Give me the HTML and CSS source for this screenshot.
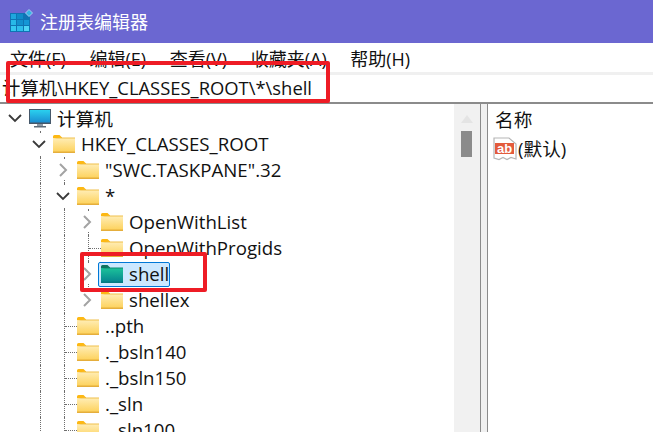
FILE: index.html
```html
<!DOCTYPE html>
<html lang="zh-CN">
<head>
  <meta charset="UTF-8">
  <title>注册表编辑器</title>
  <link rel="stylesheet" href="styles.css">
</head>
<body>
  <svg class="defs" width="0" height="0">
    <defs>
      <linearGradient id="folder-fill" x1="0" y1="0" x2="0" y2="1">
        <stop offset="0" stop-color="#ffedb5"/>
        <stop offset="1" stop-color="#fdd25c"/>
      </linearGradient>
      <linearGradient id="shell-fill" x1="0" y1="0" x2="0" y2="1">
        <stop offset="0" stop-color="#1cc39a"/>
        <stop offset="1" stop-color="#06858f"/>
      </linearGradient>
      <linearGradient id="screen-fill" x1="0" y1="0" x2="0" y2="1">
        <stop offset="0" stop-color="#2ad0ee"/>
        <stop offset="1" stop-color="#1b8ed2"/>
      </linearGradient>
      <symbol id="folder" viewBox="0 0 22 18">
        <path d="M0 1.5Q0 0 1.5 0H6.5L8.5 2H9V4H0Z" fill="#fdb813"/>
        <path d="M0 3H22V17H0Z" fill="url(#folder-fill)"/>
        <path d="M8 2.5H22V3.5H0" fill="#f0c04c"/>
        <path d="M0 16.5H22V18H0Z" fill="#e5ae3c"/>
      </symbol>
      <symbol id="folder-open" viewBox="0 0 22 18">
        <path d="M0 1.5Q0 0 1.5 0H6.5L8.5 2H9V4H0Z" fill="#0f7360"/>
        <path d="M0 3H22V17H0Z" fill="url(#shell-fill)"/>
        <path d="M8 2.5H22V3.5H0" fill="#0e8a72"/>
        <path d="M0 16.5H22V18H0Z" fill="#067a80"/>
      </symbol>
      <symbol id="chev-right" viewBox="0 0 10 14">
        <path d="M2 1L8 7L2 13" fill="none" stroke="#a3a3a3" stroke-width="2"/>
      </symbol>
      <symbol id="chev-down" viewBox="0 0 14 10">
        <path d="M1 2L7 8L13 2" fill="none" stroke="#3a3a3a" stroke-width="1.8"/>
      </symbol>
    </defs>
  </svg>

  <div class="window">
    <header class="titlebar">
      <svg class="app-icon" width="23" height="23" viewBox="0 0 23 23">
        <rect x="0" y="4" width="20" height="19" fill="#0f74b4"/>
        <rect x="1" y="5" width="5" height="5" fill="#1fa6dd"/>
        <rect x="7" y="5" width="6" height="5" fill="#0f8bc9"/>
        <rect x="1" y="11" width="5" height="5" fill="#27b9e8"/>
        <rect x="7" y="11" width="6" height="5" fill="#128fce"/>
        <rect x="14" y="11" width="5" height="5" fill="#1496d6"/>
        <rect x="1" y="17" width="5" height="5" fill="#35c8f0"/>
        <rect x="7" y="17" width="6" height="5" fill="#2dbdec"/>
        <rect x="14" y="17" width="5" height="5" fill="#4ed4f5"/>
        <path d="M19 0.5L22.5 4L19 7.5L15.5 4Z" fill="#35b5e5" stroke="#a9c8ee" stroke-width="1"/>
      </svg>
      <span>注册表编辑器</span>
    </header>

    <nav class="menubar">
      <span>文件(F)</span>
      <span>编辑(E)</span>
      <span>查看(V)</span>
      <span>收藏夹(A)</span>
      <span>帮助(H)</span>
    </nav>

    <div class="address">计算机\HKEY_CLASSES_ROOT\*\shell</div>

    <main class="panes">
      <section class="tree">
        <div class="row">
          <span class="slot"><svg class="chev-d"><use href="#chev-down"/></svg></span>
          <svg class="monitor" width="22" height="19" viewBox="0 0 22 19">
            <rect x="0" y="0" width="22" height="15" fill="#46586a"/>
            <rect x="1" y="1" width="20" height="12.5" fill="url(#screen-fill)"/>
            <rect x="8" y="15" width="6" height="2" fill="#8b98a5"/>
            <rect x="5" y="17" width="12" height="1.5" fill="#5d6b78"/>
          </svg>
          <span class="label">计算机</span>
        </div>
        <div class="row">
          <span class="slot"></span>
          <span class="slot line"><svg class="chev-d"><use href="#chev-down"/></svg></span>
          <svg class="folder"><use href="#folder"/></svg>
          <span class="label">HKEY_CLASSES_ROOT</span>
        </div>
        <div class="row">
          <span class="slot"></span>
          <span class="slot line"></span>
          <span class="slot line"><svg class="chev-r"><use href="#chev-right"/></svg></span>
          <svg class="folder"><use href="#folder"/></svg>
          <span class="label">"SWC.TASKPANE".32</span>
        </div>
        <div class="row">
          <span class="slot"></span>
          <span class="slot line"></span>
          <span class="slot line"><svg class="chev-d"><use href="#chev-down"/></svg></span>
          <svg class="folder"><use href="#folder"/></svg>
          <span class="label">*</span>
        </div>
        <div class="row">
          <span class="slot"></span>
          <span class="slot line"></span>
          <span class="slot line"></span>
          <span class="slot line"><svg class="chev-r"><use href="#chev-right"/></svg></span>
          <svg class="folder"><use href="#folder"/></svg>
          <span class="label">OpenWithList</span>
        </div>
        <div class="row">
          <span class="slot"></span>
          <span class="slot line"></span>
          <span class="slot line"></span>
          <span class="slot line tick"></span>
          <svg class="folder"><use href="#folder"/></svg>
          <span class="label">OpenWithProgids</span>
        </div>
        <div class="row">
          <span class="slot"></span>
          <span class="slot line"></span>
          <span class="slot line"></span>
          <span class="slot line"><svg class="chev-r"><use href="#chev-right"/></svg></span>
          <span class="selected">
            <svg class="folder"><use href="#folder-open"/></svg>
            <span class="label">shell</span>
          </span>
        </div>
        <div class="row">
          <span class="slot"></span>
          <span class="slot line"></span>
          <span class="slot line"></span>
          <span class="slot"><svg class="chev-r"><use href="#chev-right"/></svg></span>
          <svg class="folder"><use href="#folder"/></svg>
          <span class="label">shellex</span>
        </div>
        <div class="row">
          <span class="slot"></span>
          <span class="slot line"></span>
          <span class="slot line tick"></span>
          <svg class="folder"><use href="#folder"/></svg>
          <span class="label">..pth</span>
        </div>
        <div class="row">
          <span class="slot"></span>
          <span class="slot line"></span>
          <span class="slot line tick"></span>
          <svg class="folder"><use href="#folder"/></svg>
          <span class="label">._bsln140</span>
        </div>
        <div class="row">
          <span class="slot"></span>
          <span class="slot line"></span>
          <span class="slot line tick"></span>
          <svg class="folder"><use href="#folder"/></svg>
          <span class="label">._bsln150</span>
        </div>
        <div class="row">
          <span class="slot"></span>
          <span class="slot line"></span>
          <span class="slot line tick"></span>
          <svg class="folder"><use href="#folder"/></svg>
          <span class="label">._sln</span>
        </div>
        <div class="row">
          <span class="slot"></span>
          <span class="slot line"></span>
          <span class="slot line tick"></span>
          <svg class="folder"><use href="#folder"/></svg>
          <span class="label">._sln100</span>
        </div>
      </section>

      <div class="scrollbar">
        <span class="scroll-up"></span>
        <span class="scroll-thumb"></span>
      </div>
      <div class="splitter"></div>

      <section class="values">
        <div class="values-head">名称</div>
        <div class="value-row">
          <svg class="ab-icon" width="24" height="24" viewBox="0 0 24 24">
            <path d="M1 1H16L23 7V22L18 20.5L14 22.5L10 20.5L6 22.5L1 21Z" fill="#fff" stroke="#b5b5b5" stroke-width="1.2"/>
            <rect x="2" y="6" width="19" height="11" fill="#e35b3c"/>
            <text x="11.5" y="15.5" class="ab-text">ab</text>
          </svg>
          <span class="value-name">(默认)</span>
        </div>
      </section>
    </main>
  </div>

  <div class="mark mark-address"></div>
  <div class="mark mark-shell"></div>
</body>
</html>
```

FILE: styles.css
```css
html, body {
  margin: 0;
  padding: 0;
  height: 100%;
  overflow: hidden;
  background-color: #fff;
}
body {
  font-family: "Open Sans", "Noto Sans CJK SC", sans-serif;
  font-size: 18.67px;
  color: #111;
}
.defs {
  position: absolute;
}
.window {
  display: flex;
  flex-direction: column;
  height: 432px;
}
.titlebar {
  display: flex;
  align-items: center;
  gap: 7px;
  height: 43px;
  padding-left: 10px;
  padding-bottom: 2px;
  box-sizing: border-box;
  background-color: #6b67d1;
  color: #fff;
  font-family: "Noto Sans CJK SC", sans-serif;
  font-size: 18px;
}
.app-icon {
  flex: none;
}
.menubar {
  display: flex;
  gap: 23.6px;
  align-items: center;
  height: 29px;
  padding-left: 10px;
  padding-top: 1px;
  box-sizing: border-box;
  font-size: 18px;
  white-space: nowrap;
}
.address {
  height: 27px;
  line-height: 25px;
  padding-left: 2px;
  font-size: 18.4px;
  border-top: 3px solid #f0f0f0;
  border-bottom: 2px solid #8b8b8b;
  white-space: nowrap;
}
.panes {
  display: flex;
  flex: 1;
  min-height: 0;
}
.tree {
  width: 454px;
  padding: 1px 0 0 4px;
  box-sizing: border-box;
  overflow: hidden;
}
.row {
  display: flex;
  align-items: center;
  height: 26px;
  white-space: nowrap;
}
.slot {
  position: relative;
  flex: none;
  display: flex;
  align-items: center;
  justify-content: center;
  width: 24px;
  height: 26px;
}
.line::before {
  content: "";
  position: absolute;
  left: 12px;
  top: 0;
  bottom: 0;
  border-left: 1px dotted #6e6e6e;
}
.tick {
  width: 24px;
}
.tick::after {
  content: "";
  position: absolute;
  left: 13px;
  right: -1px;
  top: 13px;
  border-top: 1px dotted #6e6e6e;
}
.slot svg {
  position: relative;
  background-color: #fff;
  margin-left: -2px;
}
.chev-r {
  width: 10px;
  height: 14px;
  padding: 3px 2px;
}
.chev-d {
  width: 14px;
  height: 10px;
  padding: 6px 2px;
}
.folder {
  flex: none;
  width: 22px;
  height: 18px;
  margin-left: 1px;
}
.monitor {
  flex: none;
  margin-left: 1px;
}
.label {
  margin-left: 6px;
  margin-bottom: 2px;
}
.selected {
  display: flex;
  align-items: center;
  height: 23px;
  margin-left: -2px;
  padding: 0 0 0 1px;
  background-color: #cce8ff;
  border: 1px solid #0078d7;
  border-radius: 2px;
}
.scrollbar {
  width: 26px;
  box-sizing: border-box;
  padding: 2px 0 0 7px;
  display: flex;
  flex-direction: column;
  align-items: flex-start;
  background-color: #f1f1f1;
}
.scroll-up {
  width: 0;
  height: 0;
  margin-top: 9px;
  border-left: 6px solid transparent;
  border-right: 6px solid transparent;
  border-bottom: 8px solid #e4e4e4;
}
.scroll-thumb {
  width: 11px;
  height: 26px;
  margin-top: 8px;
  background-color: #8b8b8b;
}
.splitter {
  width: 6px;
  background-color: #f0f0f0;
  border-left: 1px solid #8b8b8b;
  border-right: 1px solid #8b8b8b;
}
.values {
  flex: 1;
  padding: 3px 0 0 6px;
}
.values-head {
  height: 26px;
  line-height: 26px;
  padding-left: 1px;
}
.value-row {
  display: flex;
  align-items: center;
  gap: 1px;
  height: 26px;
  padding-top: 3px;
  margin-left: -1px;
}
.ab-icon {
  margin-bottom: 1px;
}
.value-name {
  margin-bottom: 3px;
}
.ab-text {
  font-family: "Liberation Sans", sans-serif;
  font-size: 13px;
  font-weight: 700;
  fill: #fff;
  text-anchor: middle;
}
.mark {
  position: absolute;
  border: 4px solid #ee1c25;
  border-radius: 2px;
}
.mark-address {
  left: 6px;
  top: 61px;
  width: 316px;
  height: 34px;
}
.mark-shell {
  left: 80px;
  top: 252px;
  width: 119px;
  height: 32px;
}
```
